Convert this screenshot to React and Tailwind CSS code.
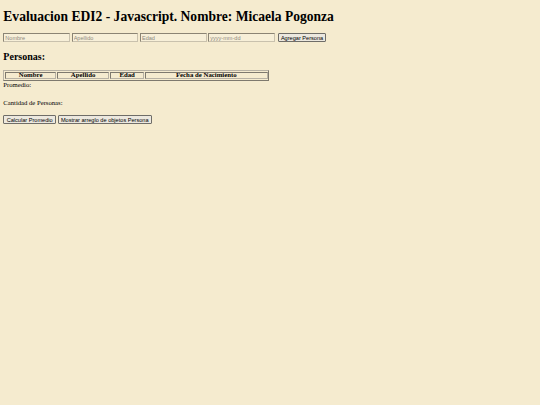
import React from "react";

const serif = "font-['Liberation_Serif','Times_New_Roman',serif]";
const sans = "font-['Liberation_Sans',Arial,sans-serif]";

function Field({ placeholder }) {
  return (
    <input
      type="text"
      placeholder={placeholder}
      className={`${sans} box-border w-[66.67px] h-[8.75px] px-[1px] py-0 text-[5.56px] leading-[6px] text-black bg-[#f7efd8] border-[1px] border-t-[#8b8474] border-l-[#8b8474] border-b-[#c9c1ad] border-r-[#c9c1ad] outline-none placeholder:text-[#8f8a80]`}
    />
  );
}

function Btn({ children, extra = "" }) {
  return (
    <button
      type="button"
      className={`${sans} ${extra} box-border block h-[8.75px] px-[2.3px] py-0 text-[5.6px] leading-[6px] text-black bg-[#ece8df] border-[1px] border-[#6f6d68] rounded-[1px] whitespace-nowrap`}
    >
      {children}
    </button>
  );
}

export default function App() {
  const cols = [
    { label: "Nombre", w: "w-[51px]" },
    { label: "Apellido", w: "w-[52px]" },
    { label: "Edad", w: "w-[34px]" },
    { label: "Fecha de Nacimiento", w: "flex-1" },
  ];
  return (
    <div className={`${serif} min-h-[405px] w-full bg-[#f5ebcf] text-black px-[3.33px] pt-[8.93px]`}>
      <h1 className="m-0 text-[13.55px] leading-[15.3px] font-bold whitespace-nowrap">
        Evaluacion EDI2 - Javascript. Nombre: Micaela Pogonza
      </h1>

      <div className="mt-[8.93px] flex items-start gap-[1.67px] h-[8.75px]">
        <Field placeholder="Nombre" />
        <Field placeholder="Apellido" />
        <Field placeholder="Edad" />
        <Field placeholder="yyyy-mm-dd" />
        <Btn extra="ml-[1px]">Agregar Persona</Btn>
      </div>

      <h2 className="m-0 mt-[9.2px] text-[10px] leading-[11.5px] font-bold">Personas:</h2>

      <div className="mt-[7.9px] box-border w-[266px] h-[10.2px] flex gap-[1px] p-[0.8px] border-[1px] border-t-[#b8b2a4] border-l-[#b8b2a4] border-b-[#7e796e] border-r-[#7e796e]">
        {cols.map((c) => (
          <div
            key={c.label}
            className={`${c.w} box-border h-full flex items-center justify-center border-[1px] border-t-[#7e796e] border-l-[#7e796e] border-b-[#b8b2a4] border-r-[#b8b2a4] text-[6.8px] leading-none font-bold whitespace-nowrap`}
          >
            {c.label}
          </div>
        ))}
      </div>

      <div className="mt-[0.6px] text-[6.67px] leading-[7.66px]">Promedio:</div>
      <p className="m-0 mt-[10.2px] text-[6.67px] leading-[7.66px]">Cantidad de Personas:</p>

      <div className="mt-[8.6px] flex items-start gap-[1.67px]">
        <Btn>Calcular Promedio</Btn>
        <Btn>Mostrar arreglo de objetos Persona</Btn>
      </div>
    </div>
  );
}
